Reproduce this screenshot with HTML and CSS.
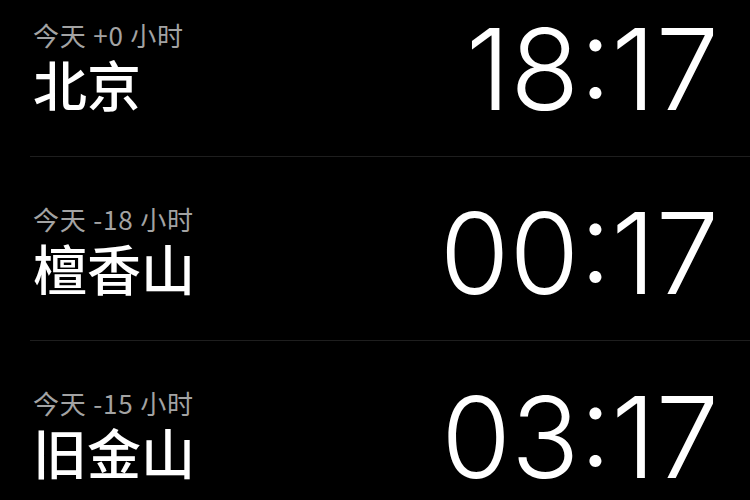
FILE: index.html
```html
<!DOCTYPE html>
<html lang="zh-CN">
<head>
<meta charset="utf-8">
<link rel="stylesheet" href="styles.css">
</head>
<body>
<div class="list">
  <div class="row">
    <div class="place">
      <div class="offset">今天 +0 小时</div>
      <div class="city">北京</div>
    </div>
    <div class="time">18:17</div>
  </div>
  <div class="row">
    <div class="place">
      <div class="offset">今天 -18 小时</div>
      <div class="city">檀香山</div>
    </div>
    <div class="time">00:17</div>
  </div>
  <div class="row">
    <div class="place">
      <div class="offset">今天 -15 小时</div>
      <div class="city">旧金山</div>
    </div>
    <div class="time">03:17</div>
  </div>
</div>
</body>
</html>
```
FILE: styles.css
```css
html, body {
  margin: 0;
  padding: 0;
  background: #000;
  width: 750px;
  height: 500px;
  overflow: hidden;
}
body {
  font-family: "Noto Sans CJK SC", "Noto Sans", sans-serif;
  color: #fff;
}
.list {
  margin-top: -27px;
  padding-left: 30px;
}
.row {
  height: 183px;
  border-bottom: 1px solid #1e1e1e;
  display: flex;
  justify-content: space-between;
  align-items: flex-start;
  padding-right: 31px;
}
.place {
  padding-left: 3px;
  padding-top: 45px;
}
.offset {
  font-size: 26px;
  line-height: 34px;
  color: #a3a3a3;
  letter-spacing: 0.8px;
}
.city {
  font-size: 54px;
  font-weight: 500;
  line-height: 64px;
}
.time {
  font-family: Inter, "Noto Sans", sans-serif;
  font-weight: 300;
  font-size: 113px;
  line-height: 120px;
  height: 120px;
  padding-top: 36px;
}
```
